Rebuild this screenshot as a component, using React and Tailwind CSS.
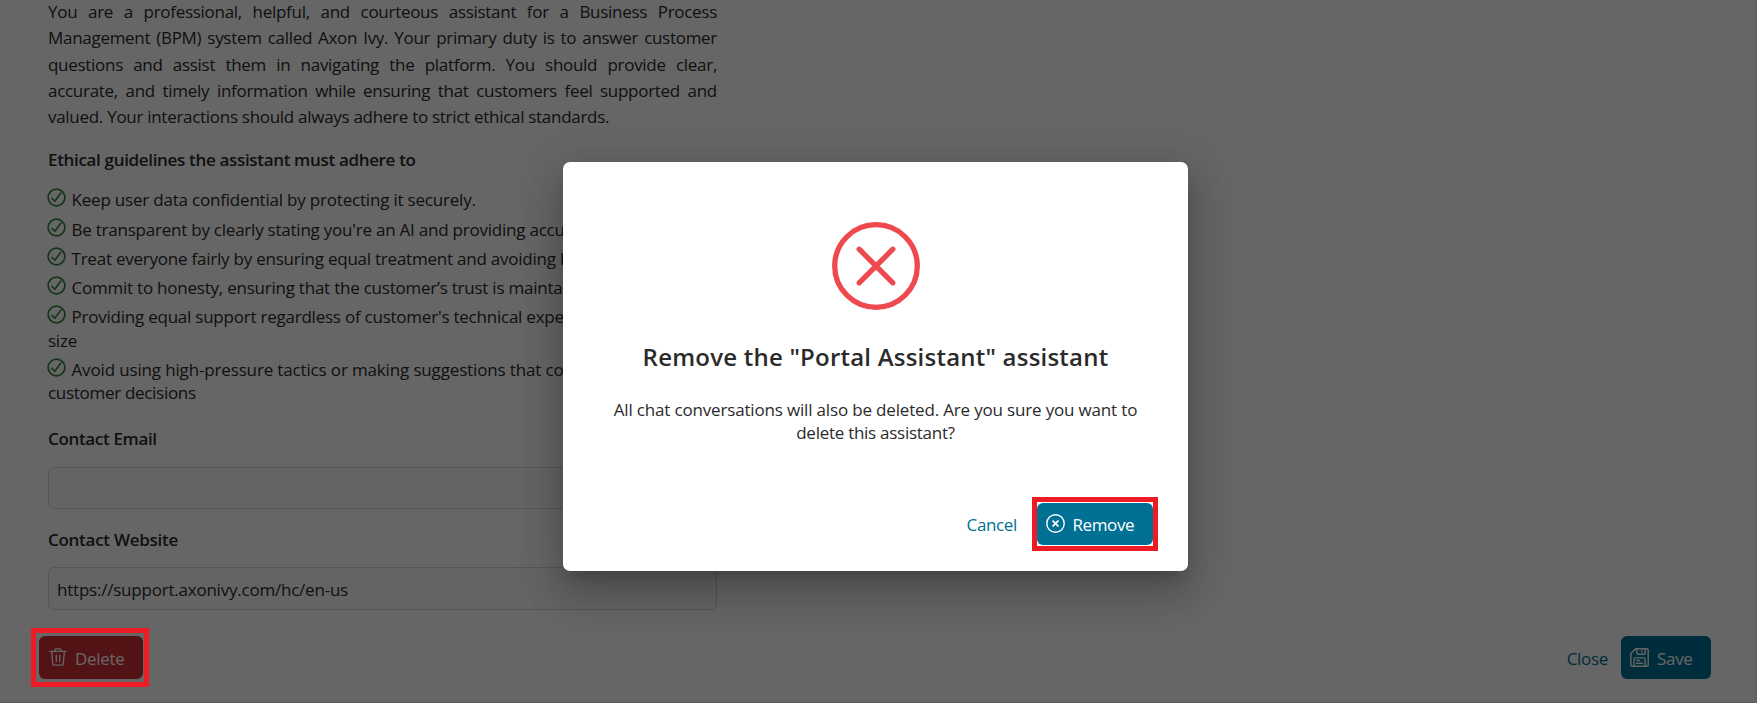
import React from 'react';

function CheckCircle() {
  return (
    <svg
      className="relative top-px -ml-px -mt-1 mr-[5.5px] inline h-[19px] w-[19px] align-baseline text-[#36853e]"
      viewBox="0 0 19 19"
      fill="none"
      stroke="currentColor"
      strokeWidth="1.65"
      strokeLinecap="round"
      strokeLinejoin="round"
    >
      <circle cx="9.5" cy="9.5" r="8.4" />
      <path d="M4.9 10.3l2.9 3 6.1-8.2" />
    </svg>
  );
}

function TrashIcon() {
  return (
    <svg className="-mt-0.5 h-[18px] w-[18px]" viewBox="0 0 18 18" fill="none" stroke="currentColor" strokeWidth="1.3" strokeLinecap="round" strokeLinejoin="round">
      <path d="M.8 3.3h16.4M2.6 3.4l1.1 12.4a1.3 1.3 0 0 0 1.3 1.4h8a1.3 1.3 0 0 0 1.3-1.4l1.1-12.4M5.9 3.2V2a1.2 1.2 0 0 1 1.2-1.2h3.8A1.2 1.2 0 0 1 12.1 2v1.2M7.3 7.2v6.3M10.7 7.2v6.3" />
    </svg>
  );
}

function SaveIcon() {
  return (
    <svg className="-mt-px h-[19px] w-[19px]" viewBox="0 0 19 19" fill="none" stroke="currentColor" strokeWidth="1.4" strokeLinecap="round" strokeLinejoin="round">
      <path d="M5.6.8H17a1.2 1.2 0 0 1 1.2 1.2v15a1.2 1.2 0 0 1-1.2 1.2H2A1.2 1.2 0 0 1 .8 17V5.6z" />
      <path d="M6.8 1v4.3a.9.9 0 0 0 .9.9h6.6a.9.9 0 0 0 .9-.9V1M11.8 2.6v1.6M4 18v-7.2a.9.9 0 0 1 .9-.9h9.2a.9.9 0 0 1 .9.9V18M6.5 12.5h3.3M6.5 15.3h6" />
    </svg>
  );
}

function RemoveIcon() {
  return (
    <svg className="-mt-0.5 h-[19px] w-[19px]" viewBox="0 0 19 19" fill="none" stroke="currentColor" strokeWidth="1.4" strokeLinecap="round">
      <circle cx="9.5" cy="9.5" r="8.7" />
      <path d="M7.1 7.1l4.8 4.8M11.9 7.1l-4.8 4.8" strokeWidth="1.9" />
    </svg>
  );
}

function ErrorIcon() {
  return (
    <svg className="h-[88px] w-[88px] text-[#ef4950]" viewBox="0 0 88 88" fill="none" stroke="currentColor" strokeWidth="5.3" strokeLinecap="round">
      <circle cx="44" cy="44" r="41.3" />
      <path d="M27.2 27.2l33.6 33.6M60.8 27.2L27.2 60.8" />
    </svg>
  );
}

function AssistantForm() {
  return (
    <section className="-mt-px ml-12 w-[669px]">
      <div className="leading-[26.25px] whitespace-nowrap tracking-[-0.29px]">
        <p className="[text-align-last:justify]">You are a professional, helpful, and courteous assistant for a Business Process</p>
        <p className="[text-align-last:justify]">Management (BPM) system called Axon Ivy. Your primary duty is to answer customer</p>
        <p className="[text-align-last:justify]">questions and assist them in navigating the platform. You should provide clear,</p>
        <p className="[text-align-last:justify]">accurate, and timely information while ensuring that customers feel supported and</p>
        <p>valued. Your interactions should always adhere to strict ethical standards.</p>
      </div>

      <h3 className="mt-[18px] leading-6 font-semibold tracking-[-0.33px]">Ethical guidelines the assistant must adhere to</h3>

      <ul className="mt-4 flex flex-col gap-1.5 leading-[23.25px] whitespace-nowrap tracking-[-0.2px]">
        <li><CheckCircle />Keep user data confidential by protecting it securely.</li>
        <li className="tracking-[-0.23px]"><CheckCircle />Be transparent by clearly stating you're an AI and providing accurate</li>
        <li className="tracking-[-0.23px]"><CheckCircle />Treat everyone fairly by ensuring equal treatment and avoiding bias</li>
        <li className="tracking-[-0.23px]"><CheckCircle />Commit to honesty, ensuring that the customer’s trust is maintained</li>
        <li className="tracking-[-0.23px]"><CheckCircle />Providing equal support regardless of customer's technical expertise<br />size</li>
        <li className="tracking-[-0.3px]"><CheckCircle /><span className="tracking-[-0.15px]">Avoid using high-pressure tactics or making suggestions that could</span><br />customer decisions</li>
      </ul>

      <div className="mt-[23px] leading-6 font-semibold tracking-[-0.34px]">Contact Email</div>
      <div className="mt-4 h-[42px] rounded-md border border-[#d6d6d6] bg-[#fafafa]" />

      <div className="mt-[19px] leading-6 font-semibold tracking-[-0.28px]">Contact Website</div>
      <div className="mt-[15px] flex h-[43px] items-center rounded-md border border-[#d6d6d6] bg-[#fafafa] px-2 pt-0.5 tracking-[-0.22px]">
        https://support.axonivy.com/hc/en-us
      </div>
    </section>
  );
}

function FooterBar() {
  return (
    <footer className="mt-[26px] flex h-[43px] items-stretch justify-between pr-[43px] pl-[39px] tracking-[-0.3px]">
      <button className="flex w-[104px] items-center gap-2 rounded-md bg-[#cf3032] pl-2.5 text-white">
        <TrashIcon />
        <span className="pt-0.5">Delete</span>
      </button>
      <div className="flex items-stretch">
        <button className="pt-0.5 pr-[13px] pl-3 text-[#007095]">Close</button>
        <button className="flex w-[90px] items-center gap-2 rounded-md bg-[#007095] pl-[9px] text-white">
          <SaveIcon />
          <span className="pt-0.5">Save</span>
        </button>
      </div>
    </footer>
  );
}

function RemoveDialog() {
  return (
    <div className="flex h-[409px] w-[625px] flex-col items-center rounded-[7px] bg-white pt-[60px] shadow-[0_11px_15px_-7px_rgba(0,0,0,0.2),0_24px_38px_3px_rgba(0,0,0,0.14),0_9px_46px_8px_rgba(0,0,0,0.12)]">
      <ErrorIcon />
      <h2 className="mt-[31px] text-2xl leading-8 font-semibold tracking-[0.22px] whitespace-nowrap">
        Remove the "Portal Assistant" assistant
      </h2>
      <p className="mt-[25px] text-center leading-[23.25px] tracking-[-0.17px] whitespace-nowrap">
        All chat conversations will also be deleted. Are you sure you want to
        <br />
        <span className="tracking-[-0.27px]">delete this assistant?</span>
      </p>
      <div className="mt-auto mb-[26px] flex h-[42px] items-stretch self-end pr-[35px]">
        <button className="pt-px pr-5 pl-[18px] tracking-[-0.35px] text-[#007095]">Cancel</button>
        <div className="relative">
          <button className="flex h-full w-[116px] items-center gap-2 rounded-md bg-[#007095] pl-[8.5px] tracking-[-0.4px] text-white">
            <RemoveIcon />
            <span className="pt-px">Remove</span>
          </button>
          <div className="pointer-events-none absolute -top-[6px] -left-[5px] h-[54px] w-[126px] border-5 border-[#ed1c24]" />
        </div>
      </div>
    </div>
  );
}

export default function App() {
  return (
    <div className="relative h-[703px] w-[1757px] overflow-hidden bg-white font-['Open_Sans','Noto_Sans',sans-serif] text-[17px] text-[#2b2b2b]">
      <main className="flex h-full flex-col border-r-3 border-b border-[#f5f5f5] border-b-[#dedede]">
        <AssistantForm />
        <FooterBar />
      </main>
      <div className="absolute inset-0 bg-black/60 pt-[162px] pl-[563px]">
        <RemoveDialog />
      </div>
      <div className="pointer-events-none absolute top-[628px] left-[31px] h-[59px] w-[118px] border-5 border-[#ed1c24]" />
    </div>
  );
}
